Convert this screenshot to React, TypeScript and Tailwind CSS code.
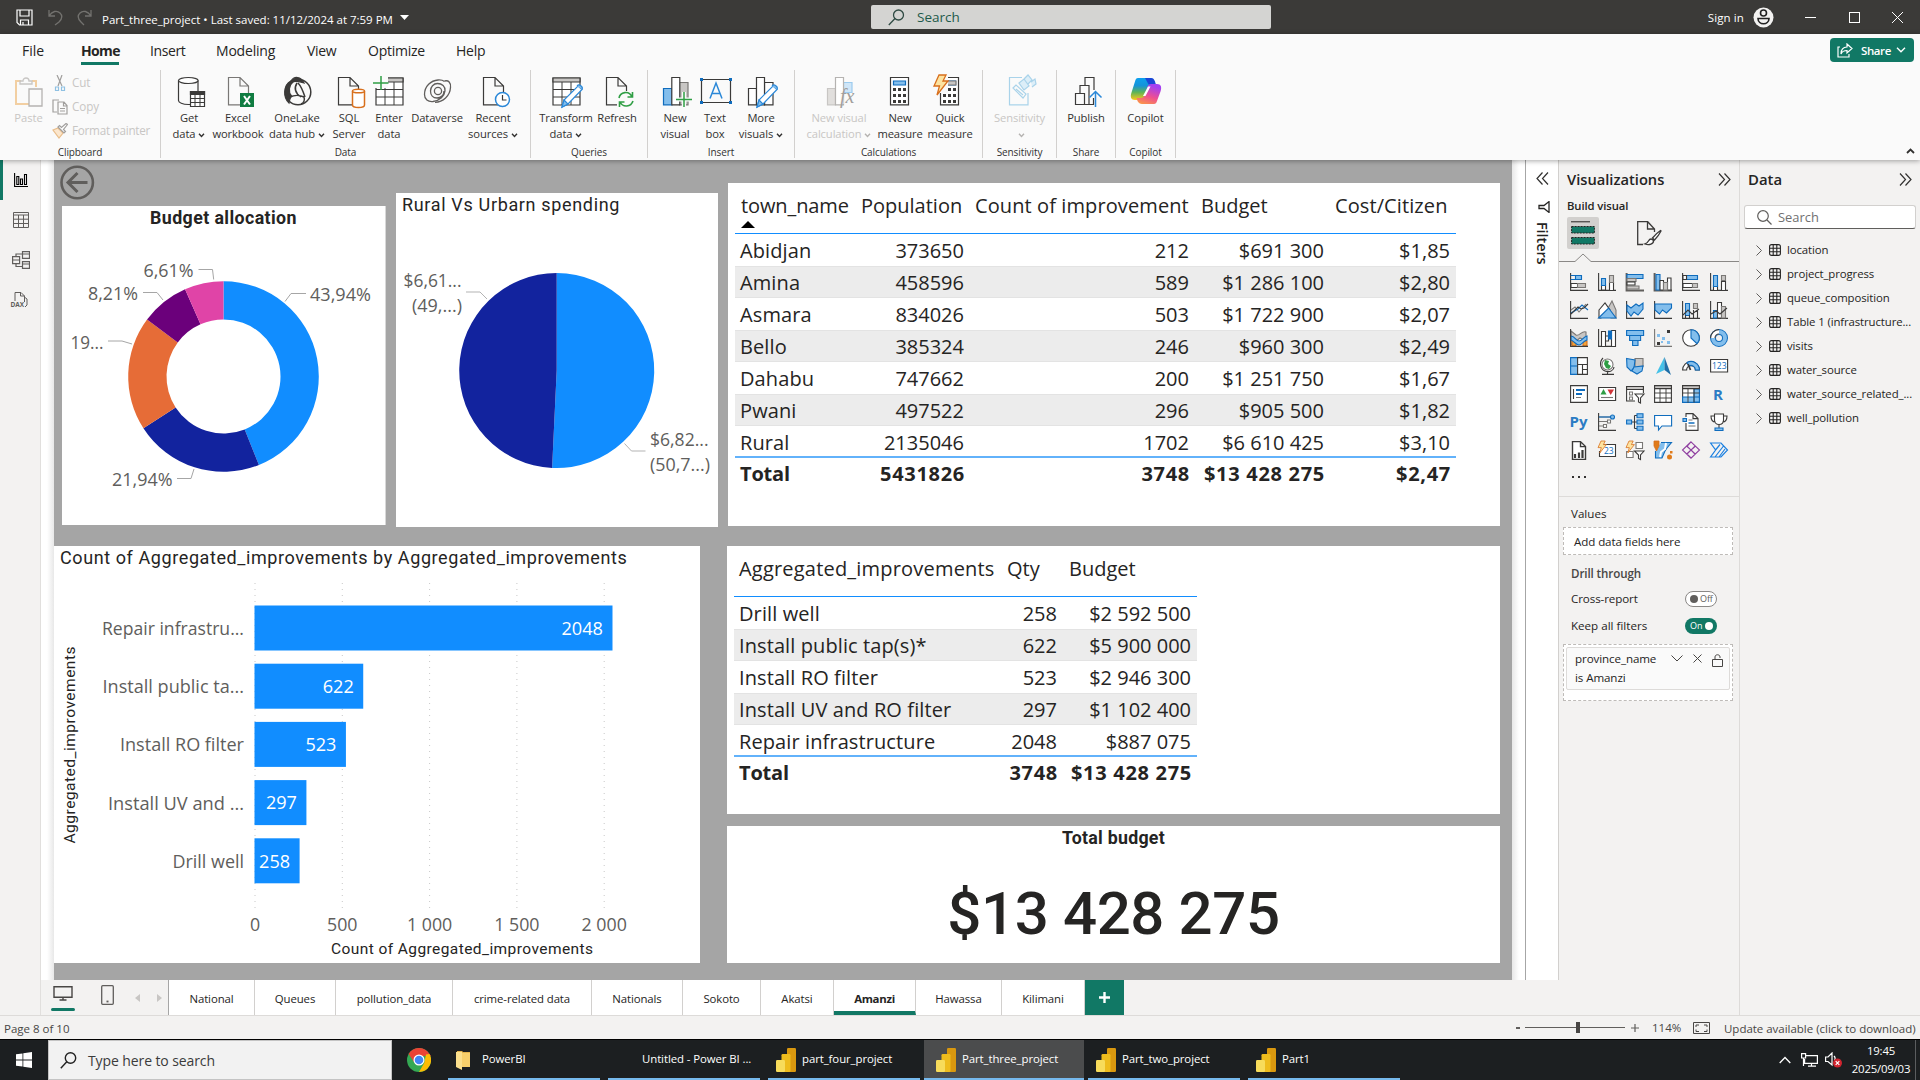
import React from "react";

type Kids = { children?: React.ReactNode };

const INK = "#3b3a39";
const BLUE = "#0f6cbd";
const SKY = "#83beec";
const GREY = "#c8c6c4";

/* ---------- Title bar ---------- */

function TitleBar() {
  return (
    <header className="flex h-[34px] w-full shrink-0 items-center bg-[#3b3a38] text-white">
      <div className="flex w-[855px] items-center pl-[16px]">
        <svg width="17" height="17" viewBox="0 0 17 17" fill="none" stroke="#fff" strokeWidth="1.2">
          <path d="M1 1h15v15H3.5L1 13.5z" />
          <path d="M4 1v6h9V1M4.5 16v-5h8v5M7 13v3" />
        </svg>
        <svg className="ml-[15px]" width="15" height="17" viewBox="0 0 15 17" fill="none" stroke="#73726f" strokeWidth="1.3">
          <path d="M1 1v6h6M1 7C4 2 9 1 12 4s2 6-1 9l-4 3" />
        </svg>
        <svg className="ml-[14px]" width="15" height="17" viewBox="0 0 15 17" fill="none" stroke="#73726f" strokeWidth="1.3">
          <path d="M14 1v6H8M14 7C11 2 6 1 3 4s-2 6 1 9l3 3" />
        </svg>
        <span className="ml-[10px] mt-[6px] whitespace-pre text-[11.5px] leading-4 tracking-[-0.01px]">
          Part_three_project • Last saved: 11/12/2024 at 7:59 PM
        </span>
        <svg className="ml-[7px]" width="9" height="5" viewBox="0 0 9 5">
          <path d="M0 0h9L4.5 5z" fill="#fff" />
        </svg>
      </div>
      <div className="ml-[16px] flex h-6 w-[400px] items-center rounded-[2px] bg-[#d4d4d2] pl-[17px]">
        <svg width="17" height="17" viewBox="0 0 17 17" fill="none" stroke="#2f4a43" strokeWidth="1.3">
          <circle cx="10.5" cy="6" r="5" />
          <path d="M7 9.5L.8 16" />
        </svg>
        <span className="ml-3 text-[13.5px] text-[#1d5a4b]">Search</span>
      </div>
      <div className="ml-auto flex items-center pr-[17px]">
        <span className="pt-px text-[11.5px] tracking-[0.1px]">Sign in</span>
        <svg className="ml-[9px]" width="21" height="21" viewBox="0 0 21 21" fill="none" stroke="#222" strokeWidth="1.6">
          <circle cx="10.5" cy="10.5" r="10" fill="#f3f2f1" stroke="none" />
          <circle cx="10.5" cy="6" r="3" />
          <path d="M5 11.5h11c0 7-11 7-11 0z" />
        </svg>
        <div className="ml-[31px] h-px w-[11px] bg-white" />
        <div className="ml-[33px] h-[11px] w-[11px] border border-white" />
        <svg className="ml-[32px]" width="11" height="11" viewBox="0 0 11 11" stroke="#fff">
          <path d="M0 0l11 11M11 0L0 11" />
        </svg>
      </div>
    </header>
  );
}

/* ---------- Ribbon icons, drawn in a 32 x 32 box ---------- */

function RIcon({ children }: Kids) {
  return (
    <svg className="overflow-visible" width="32" height="32" viewBox="0 0 32 32" fill="none" stroke={INK} strokeWidth="1.2">
      {children}
    </svg>
  );
}

function Doc({ x = 6, c = INK }: { x?: number; c?: string }) {
  return (
    <g transform={`translate(${x} 0)`} stroke={c}>
      <path d="M12 1.5H.5v27.3h20V10zM12 1.5V10h8.5" fill="#fafafa" />
    </g>
  );
}

function Grid() {
  return (
    <g>
      <path d="M3 2h27v27H3z" fill="#fff" />
      <path d="M3 2h27v4H3z" fill={GREY} />
      <path d="M3 13.5h27M3 21h27M12 6v23M21 6v23" strokeWidth="1" />
    </g>
  );
}

function Pencil() {
  return (
    <g stroke="#2b88d8">
      <path d="M28 10l4 3.5L18 28l-6 3 2-7z" fill="#fff" />
      <path d="M14 24l4 4-6 3zM27 10c2-2.5 6.5.5 5 3.5" fill="#83beec" />
    </g>
  );
}

const icoGet = (
  <RIcon>
    <path d="M5.5 4.5v20c0 2 4 4 10 4h2M25 4.5V15" />
    <ellipse cx="15.3" cy="4.5" rx="9.8" ry="3" fill="#fff" />
    <path d="M17.5 15.5h14v15h-14z" fill="#fff" />
    <path d="M17.5 15.5h14v3h-14z" fill={INK} />
    <path d="M17.5 22.5h14M17.5 26.5h14M22 18v12M27 18v12" strokeWidth="1" />
  </RIcon>
);
const icoExcel = (
  <RIcon>
    <Doc c="#797775" />
    <path d="M18 17h14v14H18z" fill="#107c41" stroke="none" />
    <path d="M22 20l6 8.5M28 20l-6 8.5" stroke="#fff" strokeWidth="2" />
  </RIcon>
);
const icoLake = (
  <RIcon>
    <circle cx="17" cy="16" r="12.8" strokeWidth="1.5" />
    <path d="M10 5C2 9 2 22 8 27c.5-3 1-5 2.5-7C7 16 8 9 12 6z" fill={INK} />
    <path d="M10 5c3-5 10-5 13 2-5-2-9-2-13-1z" fill={INK} />
    <path d="M16 7c-3 5-2 10 4 14M17 7c3 3 5 8 7 14M9 21c4-2 10-2 14 0 1 3 0 6-3 7" strokeWidth="1.5" />
  </RIcon>
);
const icoSql = (
  <RIcon>
    <Doc x={5} />
    <path d="M19.5 15v14c0 1.5 2 2.5 6 2.5s6-1 6-2.5V15" fill="#fff" stroke="#d86f1c" strokeWidth="1.5" />
    <ellipse cx="25.5" cy="15" rx="6" ry="1.8" fill="#fff" stroke="#d86f1c" strokeWidth="1.5" />
  </RIcon>
);
const icoEnter = (
  <RIcon>
    <Grid />
    <path d="M0 0h15v12H0z" fill="#fafafa" stroke="none" />
    <path d="M8 0v14M0 7h15.5" stroke="#2f9e44" strokeWidth="1.5" />
  </RIcon>
);
const icoDataverse = (
  <RIcon>
    <g strokeWidth="1.3" stroke="#605e5c">
      <circle cx="17" cy="15" r="3.6" />
      <path d="M23 15c0 4-3 7-7 7s-6.500-3-6.500-7 3-7.500 7-7.500c4.500 0 8 3 7.500 7.500-.5 5-5 9.500-12 10.500-5 .5-8.500-2-8.500-7C3.500 10 10 4.500 17 4c3-.2 5 .3 6.500 1.500" />
      <path d="M23.500 5c4-1 6.500 1.500 6 6.500C29 20 22 26 14 26.300" />
    </g>
  </RIcon>
);
const icoRecent = (
  <RIcon>
    <Doc />
    <circle cx="25.5" cy="23.5" r="7" fill="#fff" stroke="#2b88d8" strokeWidth="1.5" />
    <path d="M25.5 19v5h4" />
  </RIcon>
);
const icoTransform = (
  <RIcon>
    <Grid />
    <Pencil />
  </RIcon>
);
const icoRefresh = (
  <RIcon>
    <Doc x={5} />
    <path d="M16 15h17v17H16z" fill="#fafafa" stroke="none" />
    <path d="M18 22c1-6 10-8 13-1M31.5 16v5h-5M32 25c-2 6-10 7-13 1M18.5 31v-5h5" stroke="#2f9e44" strokeWidth="1.6" />
  </RIcon>
);
const icoNewVisual = (
  <RIcon>
    <path d="M4.5 12.5h8.5v16.3H4.5z" fill={SKY} stroke={BLUE} />
    <path d="M20.5 6.5h8.5v22.3h-8.5z" fill={GREY} stroke="#797775" />
    <path d="M12.8 1.5h8v27.3h-8z" fill="#fff" />
    <path d="M17 23.5h16M25 16v15" stroke="#fafafa" strokeWidth="4" />
    <path d="M17 23.5h16M25 16v15" stroke="#2f9e44" strokeWidth="1.5" />
  </RIcon>
);
const icoTextBox = (
  <RIcon>
    <path d="M2.5 3.5h29v23h-29z" />
    <path d="M11 22.5l6-15.5 6 15.5M13 17.5h8" stroke="#2b88d8" strokeWidth="1.5" />
    <path d="M1 2h3v3H1zM30 2h3v3h-3zM1 25h3v3H1zM30 25h3v3h-3z" fill={BLUE} stroke="none" />
  </RIcon>
);
const icoMore = (
  <RIcon>
    <path d="M3.5 12.5h8v16.3h-8zM19.5 6.5H28v22.3h-8.5z" fill="#fff" />
    <path d="M11.5 1.5h8v27.3h-8z" fill="#fff" />
    <Pencil />
  </RIcon>
);
const icoCalc = (
  <RIcon>
    <path d="M4.5 12.5h8v16.3h-8z" fill="#e1dfdd" stroke="#c8c6c4" />
    <path d="M20.5 6.5H29v10h-8.5z" fill="#cfe6f8" stroke="#9ccbee" />
    <path d="M12.5 1.5h8v27.3h-8z" fill="#fff" stroke="#b5b3b1" />
    <path d="M17 14h3.500v14H17z" fill="#fafafa" stroke="none" />
    <text x="17" y="27" fontFamily="Liberation Serif" fontStyle="italic" fontSize="20" fill="#a19f9d" stroke="none">fx</text>
  </RIcon>
);
function Calculator() {
  return (
    <g>
      <path d="M6.5 1.5h18v27.3h-18z" fill="#fff" />
      <path d="M9.5 5h12v4h-12z" fill={SKY} stroke={BLUE} />
      <path d="M9 13.5h13M9 19.5h13M9 25.5h13" strokeWidth="3" strokeDasharray="3 2" />
    </g>
  );
}
function Bolt({ k = 1, x = 0, y = 0 }: { k?: number; x?: number; y?: number }) {
  return (
    <path
      transform={`translate(${x} ${y}) scale(${k})`}
      d="M5 0h7L9 6h5L3 20l2.5-9H0z"
      fill="#fde3a0"
      stroke="#d86f1c"
      strokeWidth="1.3"
    />
  );
}
const icoMeasure = (
  <RIcon>
    <Calculator />
  </RIcon>
);
const icoQuick = (
  <RIcon>
    <Calculator />
    <path d="M13 5h9v4h-9z" fill={GREY} stroke="#797775" />
    <path d="M4 0h10v17H4z" fill="#fafafa" stroke="none" />
    <Bolt y={-1} />
  </RIcon>
);
const icoSens = (
  <RIcon>
    <g stroke="#a9d3ea">
      <path d="M24 17v11.8H5.5V1.5H18" />
      <path d="M9 12l3-3 10 9-3 4zM12 13l7 6" />
      <path d="M15 7l5-4 5 7-5 4zM20 3l4-4 4 5-4 4M27 6l4-3 1 5-4 3" fill="#dceef8" />
    </g>
  </RIcon>
);
const icoPublish = (
  <RIcon>
    <path d="M5.5 17.5h9v11h-9zM10 17V9.5h9V28M15 9V1.500h9V14M14.5 28.5h9V22" />
    <path d="M25.5 31V15.5M19.5 21.5l6-6 6 6" stroke="#2b88d8" strokeWidth="1.5" />
  </RIcon>
);
const icoCopilot = (
  <RIcon>
    <defs>
      <linearGradient id="cpA" x1="0" y1="0" x2="0" y2="1">
        <stop offset="0" stopColor="#0ca0ee" />
        <stop offset="0.35" stopColor="#1593d8" />
        <stop offset="0.65" stopColor="#5fb455" />
        <stop offset="1" stopColor="#fdc81a" />
      </linearGradient>
      <linearGradient id="cpB" x1="0.4" y1="0" x2="0" y2="1">
        <stop offset="0" stopColor="#a53ff0" />
        <stop offset="0.5" stopColor="#ef5090" />
        <stop offset="1" stopColor="#fda33b" />
      </linearGradient>
    </defs>
    <g stroke="none">
      <path d="M8 2h12c2 0 3.500 1 4.500 3.500L26 10h-5c-2 0-3 1-3.500 2.500l-3 9C14 23 12.500 24 11 24H5C1 24 0 21 1.500 16.500L5 5.500C5.500 3 6.500 2 8 2z" fill="url(#cpA)" />
      <path d="M15 2h6c2 0 3 1 4 3.500L26 9h-5c-2 0-3-1-3.500-2.500z" fill="#1b46d6" />
      <path d="M24 28H12c-2 0-3.500-1-4.500-3l-1-3H11c2 0 3-1 3.500-2.500l3-9C18 9 19.500 8 21 8h6c4 0 5 3 3.500 7.500L27 25c-.5 2-1.500 3-3 3z" fill="url(#cpB)" />
      <path d="M18 10.500h2.500L15.500 20H13z" fill="#fff" />
    </g>
  </RIcon>
);

/* ---------- Ribbon ---------- */

function Caret({ c = "#323130" }: { c?: string }) {
  return (
    <svg className="ml-[3px] inline-block" width="7" height="5" viewBox="0 0 7 5" fill="none" stroke={c} strokeWidth="1.4">
      <path d="M1 .8l2.500 2.700L6 .8" />
    </svg>
  );
}

type Item = { icon: React.ReactNode; a: string; b?: string; w: string; caret?: boolean; off?: boolean };

function Group({ label, width, pad, items }: { label: string; width: string; pad: string; items: Item[] }) {
  return (
    <div className={"flex h-[88px] flex-col border-r border-[#d2d0ce] " + width}>
      <div className={"flex h-[76px] " + pad}>
        {items.map((it) => (
          <div key={it.a + it.b} className={"flex flex-col items-center pt-[6px] " + it.w}>
            {it.icon}
            <div
              className={
                "mt-[2px] text-center text-[11.2px] leading-4 whitespace-nowrap tracking-[-0.1px] " +
                (it.off ? "text-[#c8c6c4]" : "text-[#323130]")
              }
            >
              <div>{it.a}</div>
              <div>
                {it.b}
                {it.caret && <Caret c={it.off ? "#b5b3b1" : "#323130"} />}
              </div>
            </div>
          </div>
        ))}
      </div>
      <div className="pt-[3px] text-center text-[10px] leading-[12px] tracking-[-0.1px] text-[#323130]">{label}</div>
    </div>
  );
}

function Clipboard() {
  return (
    <div className="flex h-[88px] w-[161px] flex-col border-r border-[#d2d0ce] text-[11.7px] text-[#c8c6c4]">
      <div className="flex h-[76px]">
        <div className="flex w-[49px] flex-col items-center pl-[8px] pt-[6px]">
          <svg width="28" height="32" viewBox="0 0 28 32" fill="none" strokeWidth="1.3">
            <path d="M14 28H1V5h5M17 5h4v6" stroke="#f2cfa2" strokeWidth="2" />
            <path d="M5 8V5h3c0-4 6-4 6 0h3v3z" stroke="#c8c6c4" />
            <path d="M14 13h13v17H14z" stroke="#b5b3b1" />
          </svg>
          <div className="mt-[2px] text-[11.2px] leading-4">Paste</div>
        </div>
        <div className="flex flex-col gap-[8px] pl-[3px] pt-[5px]">
          <div className="flex h-4 items-center">
            <svg width="16" height="16" viewBox="0 0 16 16" fill="none" stroke="#a19f9d" strokeWidth="1.2">
              <path d="M5 0l5 11M10 0L6 11" />
              <path d="M3.5 12h3v3.500h-3zM9.500 12h3v3.500h-3z" stroke="#8fc1e3" />
            </svg>
            <span className="ml-1 tracking-[-0.1px]">Cut</span>
          </div>
          <div className="flex h-4 items-center">
            <svg width="16" height="16" viewBox="0 0 16 16" fill="none" stroke="#a19f9d" strokeWidth="1.2">
              <path d="M5 13H1V1h6M6 3h6l3 3.500V15H6zM11.5 3v4H15M8 9.500h5M8 12h5" />
            </svg>
            <span className="ml-1 tracking-[-0.1px]">Copy</span>
          </div>
          <div className="flex h-4 items-center">
            <svg width="16" height="16" viewBox="0 0 16 16" fill="none" strokeWidth="1.2">
              <path d="M1 7l5-2 5 5-4 5z" fill="#fbe6cd" stroke="#e9bd8a" />
              <path d="M6 4l6 6 1.500-1.500-2-2 4-5-1.500-1-4.500 4-2-2z" stroke="#a19f9d" fill="#fff" />
            </svg>
            <span className="ml-1 whitespace-nowrap tracking-[-0.25px]">Format painter</span>
          </div>
        </div>
      </div>
      <div className="pt-[3px] text-center text-[10px] leading-[12px] tracking-[-0.1px] text-[#323130]">Clipboard</div>
    </div>
  );
}

const GROUPS: { label: string; width: string; pad: string; items: Item[] }[] = [
  {
    label: "Data",
    width: "w-[370px]",
    pad: "pl-[5px]",
    items: [
      { icon: icoGet, a: "Get", b: "data", w: "w-[46px]", caret: true },
      { icon: icoExcel, a: "Excel", b: "workbook", w: "w-[52px]" },
      { icon: icoLake, a: "OneLake", b: "data hub", w: "w-[66px]", caret: true },
      { icon: icoSql, a: "SQL", b: "Server", w: "w-[38px]" },
      { icon: icoEnter, a: "Enter", b: "data", w: "w-[42px]" },
      { icon: icoDataverse, a: "Dataverse", w: "w-[54px]" },
      { icon: icoRecent, a: "Recent", b: "sources", w: "w-[58px]", caret: true },
    ],
  },
  {
    label: "Queries",
    width: "w-[117px]",
    pad: "pl-[7px]",
    items: [
      { icon: icoTransform, a: "Transform", b: "data", w: "w-[56px]", caret: true },
      { icon: icoRefresh, a: "Refresh", w: "w-[46px]" },
    ],
  },
  {
    label: "Insert",
    width: "w-[147px]",
    pad: "pl-[9px]",
    items: [
      { icon: icoNewVisual, a: "New", b: "visual", w: "w-[36px]" },
      { icon: icoTextBox, a: "Text", b: "box", w: "w-[44px]" },
      { icon: icoMore, a: "More", b: "visuals", w: "w-[48px]", caret: true },
    ],
  },
  {
    label: "Calculations",
    width: "w-[188px]",
    pad: "pl-[9px]",
    items: [
      { icon: icoCalc, a: "New visual", b: "calculation", w: "w-[70px]", caret: true, off: true },
      { icon: icoMeasure, a: "New", b: "measure", w: "w-[52px]" },
      { icon: icoQuick, a: "Quick", b: "measure", w: "w-[48px]" },
    ],
  },
  { label: "Sensitivity", width: "w-[74px]", pad: "", items: [{ icon: icoSens, a: "Sensitivity", w: "w-[73px]", caret: true, off: true }] },
  { label: "Share", width: "w-[59px]", pad: "", items: [{ icon: icoPublish, a: "Publish", w: "w-[58px]" }] },
  { label: "Copilot", width: "w-[60px]", pad: "", items: [{ icon: icoCopilot, a: "Copilot", w: "w-[59px]" }] },
];

function Ribbon() {
  return (
    <div className="relative z-10 flex h-[126px] w-full shrink-0 flex-col bg-[#fafafa] shadow-[0_1px_5px_rgba(0,0,0,0.35)]">
      <div className="flex h-[36px]">
        <nav className="flex text-[14px] leading-[33px] text-[#252423]">
          <span className="ml-[22px] w-[59px]">File</span>
          <span className="relative w-[69px] font-bold tracking-[-0.65px]">
            Home
            <i className="absolute left-0 top-[28px] block h-[3px] w-[38px] bg-[#117865]" />
          </span>
          <span className="w-[66px] tracking-[-0.4px]">Insert</span>
          <span className="w-[91px] tracking-[-0.2px]">Modeling</span>
          <span className="w-[61px] tracking-[-0.3px]">View</span>
          <span className="w-[88px] tracking-[-0.25px]">Optimize</span>
          <span className="tracking-[-0.2px]">Help</span>
        </nav>
        <button className="ml-auto mr-[6px] mt-1 flex h-6 w-[84px] items-center rounded-[4px] bg-[#117865] pl-[7px] text-[11.5px] font-semibold text-white">
          <svg width="17" height="15" viewBox="0 0 17 15" fill="none" stroke="#fff" strokeWidth="1.2">
            <path d="M3 4H1v10h11v-3M10 1l5 4.500-5 4.500V7.500C7 7.500 5 8.500 4 11c0-4 2-7 6-7z" />
          </svg>
          <span className="ml-[7px] pt-px tracking-[-0.4px]">Share</span>
          <svg className="ml-[5px]" width="10" height="6" viewBox="0 0 10 6" fill="none" stroke="#fff" strokeWidth="1.4">
            <path d="M1 .8l4 4 4-4" />
          </svg>
        </button>
      </div>
      <div className="flex">
        <Clipboard />
        {GROUPS.map((g) => (
          <Group key={g.label} {...g} />
        ))}
        <svg className="ml-auto mr-[5px] mt-[78px]" width="9" height="6" viewBox="0 0 9 6" fill="none" stroke="#323130" strokeWidth="1.8">
          <path d="M1 5l3.500-3.500L8 5" />
        </svg>
      </div>
    </div>
  );
}

/* ---------- Left rail ---------- */

function Rail() {
  return (
    <aside className="flex w-[41px] shrink-0 flex-col border-r border-[#e1dfdd] bg-[#f3f2f1]">
      <div className="flex h-[40px] items-center border-l-[3px] border-[#117865] pl-[11px]">
        <svg width="14" height="15" viewBox="0 0 14 15" fill="none" stroke="#000" strokeWidth="1.1">
          <path d="M.6 0v13.500H14M2.800 3.500h2v8h-2zM6.500 6h2v5.500h-2zM10.500 1.500h2v10h-2z" />
        </svg>
      </div>
      <div className="flex h-[40px] items-center pl-[13px]">
        <svg width="16" height="16" viewBox="0 0 16 16" fill="none" stroke="#605e5c">
          <path d="M.5.5h15v15H.5zM.5 3h15M.5 7.200h15M.5 11.500h15M5.500 3v12.500M10.500 3v12.500" />
        </svg>
      </div>
      <div className="flex h-[40px] items-center pl-[12px]">
        <svg width="18" height="18" viewBox="0 0 18 18" fill="none" stroke="#605e5c" strokeWidth="1.2">
          <path d="M.6 5.600h7v7h-7zM.6 9h7M10.500.6h7v6.800h-7zM10.500 3h7M10.500 10.600h7v6.800h-7zM10.500 13h7M4 5.500V3h6.500M4 12.500V15.500h6.500" />
        </svg>
      </div>
      <div className="flex h-[40px] items-center pl-[10px]">
        <svg width="19" height="18" viewBox="0 0 19 18" fill="none" stroke="#605e5c">
          <path d="M5 10V1.500h6l3.500 3.500v6M10.500 1.500V5h4M15 6.500l2 1.500v6l-2 2" />
          <text x="0.500" y="16" fontSize="6.500" fontWeight="700" fontFamily="Open Sans" fill="#605e5c" stroke="none">DAX</text>
        </svg>
      </div>
    </aside>
  );
}

/* ---------- Report visuals ---------- */

function slice(cx: number, cy: number, R: number, r: number, from: number, to: number) {
  const p = (rad: number, f: number) => {
    const t = f * 2 * Math.PI;
    return (cx + rad * Math.sin(t)).toFixed(2) + " " + (cy - rad * Math.cos(t)).toFixed(2);
  };
  const big = to - from > 0.5 ? 1 : 0;
  if (r === 0) return `M${cx} ${cy}L${p(R, from)}A${R} ${R} 0 ${big} 1 ${p(R, to)}Z`;
  return `M${p(R, from)}A${R} ${R} 0 ${big} 1 ${p(R, to)}L${p(r, to)}A${r} ${r} 0 ${big} 0 ${p(r, from)}Z`;
}

function L({ x, y, w, s = 17.5, fill = "#605e5c", children }: { x: number; y: number; w: number; s?: number; fill?: string; children: string }) {
  return (
    <text x={x} y={y} textLength={w} lengthAdjust="spacingAndGlyphs" fontFamily="Open Sans" fontSize={s} fill={fill}>
      {children}
    </text>
  );
}

function BudgetDonut() {
  const parts: [number, number, string][] = [
    [0, 0.4394, "#118dff"],
    [0.4394, 0.6588, "#12239e"],
    [0.6588, 0.8518, "#e66c37"],
    [0.8518, 0.9339, "#6b007b"],
    [0.9339, 1, "#e044a7"],
  ];
  return (
    <div className="h-[319px] w-[324px] border-r border-[#d8d8d8] bg-white">
      <h3 className="h-[24px] text-center font-[Roboto] text-[17.8px] font-bold leading-[24px] tracking-[0.4px] text-[#252423]">Budget allocation</h3>
      <svg width="323" height="295" viewBox="62 230 323 295">
        {parts.map(([a, b, c]) => (
          <path key={c} d={slice(223.5, 376.5, 95.3, 57, a, b)} fill={c} />
        ))}
        <g fill="none" stroke="#a6a6a6" strokeWidth="1">
          <path d="M198.5 269.500h14l1.200 10M143 292.500h14l6 7.500M306 293.500h-15l-6 8M108 341h14l10 3M177 478.500h14l3-9.500" />
        </g>
        <L x={143.5} y={276.7} w={50}>6,61%</L>
        <L x={88} y={299.7} w={50}>8,21%</L>
        <L x={310} y={300.7} w={61}>43,94%</L>
        <L x={70.5} y={348.7} w={33}>19...</L>
        <L x={112} y={485.7} w={60.5}>21,94%</L>
      </svg>
    </div>
  );
}

function SpendingPie() {
  return (
    <div className="h-[334px] w-[322px] bg-white">
      <h3 className="h-[24px] pl-[6px] font-[Roboto] text-[18px] leading-[24px] tracking-[0.66px] text-[#252423]">Rural Vs Urbarn spending</h3>
      <svg width="322" height="310" viewBox="396 217 322 310">
        <path d={slice(556.7, 370.5, 97.5, 0, 0, 0.5075)} fill="#118dff" />
        <path d={slice(556.7, 370.5, 97.5, 0, 0.5075, 1)} fill="#12239e" />
        <g fill="none" stroke="#b3b3b3">
          <path d="M466 292h14l7 7M624.500 443.500l7 7.500h14" />
        </g>
        <L x={403.5} y={286.7} w={58}>$6,61...</L>
        <L x={412} y={312.2} w={50}>(49,...)</L>
        <L x={650} y={445.7} w={58.5}>$6,82...</L>
        <L x={650} y={471.2} w={60}>(50,7...)</L>
      </svg>
    </div>
  );
}

const TOWNS = [
  ["Abidjan", "373650", "212", "$691 300", "$1,85"],
  ["Amina", "458596", "589", "$1 286 100", "$2,80"],
  ["Asmara", "834026", "503", "$1 722 900", "$2,07"],
  ["Bello", "385324", "246", "$960 300", "$2,49"],
  ["Dahabu", "747662", "200", "$1 251 750", "$1,67"],
  ["Pwani", "497522", "296", "$905 500", "$1,82"],
  ["Rural", "2135046", "1702", "$6 610 425", "$3,10"],
];

const FIXES = [
  ["Drill well", "258", "$2 592 500"],
  ["Install public tap(s)*", "622", "$5 900 000"],
  ["Install RO filter", "523", "$2 946 300"],
  ["Install UV and RO filter", "297", "$1 102 400"],
  ["Repair infrastructure", "2048", "$887 075"],
];

function Rows({ rows, cols, total }: { rows: string[][]; cols: string; total: string[] }) {
  return (
    <div className="text-[20px] text-[#252423]">
      {rows.map((r, i) => (
        <div key={r[0]} className={"grid h-8 " + cols + (i % 2 ? " border-y border-[#e3e3e3] bg-[#ececec] leading-[31px]" : " leading-[33px]")}>
          {r.map((c, j) => (
            <span key={j} className={"h-[30px] whitespace-nowrap px-[6px] " + (j ? "text-right" : "pl-[5px] text-left tracking-[0.1px]")}>
              {c}
            </span>
          ))}
        </div>
      ))}
      <div className={"mt-[-2px] grid h-8 border-t-2 border-[#62b2fb] font-bold leading-[31px] " + cols}>
        {total.map((c, j) => (
          <span key={j} className={"whitespace-nowrap " + (j ? "pr-[5px] text-right tracking-[0.7px]" : "pl-[5px] text-left tracking-[-0.2px]")}>
            {c}
          </span>
        ))}
      </div>
    </div>
  );
}

function TownTable() {
  const cols = "grid-cols-[121px_114px_225px_135px_126px]";
  return (
    <div className="h-[343px] w-[772px] bg-white pl-[7px]">
      <div className="w-[721px]">
        <div className={"grid h-[51px] border-b border-[#118dff] pt-[9px] text-[20px] leading-[28px] whitespace-nowrap text-[#252423] " + cols}>
          <div className="pl-[6px] tracking-[-0.1px]">
            town_name
            <svg className="mt-px block" width="14" height="7" viewBox="0 0 14 7">
              <path d="M0 7h14L7 0z" />
            </svg>
          </div>
          <span className="pl-[5px]">Population</span>
          <span className="pl-[5px] tracking-[0.1px]">Count of improvement</span>
          <span className="pl-[6px]">Budget</span>
          <span className="pl-[5px] tracking-[0.1px]">Cost/Citizen</span>
        </div>
        <Rows rows={TOWNS} cols={cols} total={["Total", "5431826", "3748", "$13 428 275", "$2,47"]} />
      </div>
    </div>
  );
}

function FixTable() {
  const cols = "grid-cols-[267px_62px_134px]";
  return (
    <div className="h-[268px] w-[773px] bg-white pl-[7px]">
      <div className="w-[463px]">
        <div className={"grid h-[51px] border-b border-[#118dff] pt-[9px] text-[20px] leading-[28px] whitespace-nowrap text-[#252423] " + cols}>
          <span className="pl-[5px] tracking-[0.2px]">Aggregated_improvements</span>
          <span className="pl-[6px]">Qty</span>
          <span className="pl-[6px]">Budget</span>
        </div>
        <Rows rows={FIXES} cols={cols} total={["Total", "3748", "$13 428 275"]} />
      </div>
    </div>
  );
}

function ImprovementBars() {
  const bars: [string, number, number, number][] = [
    ["Repair infrastru...", 102, 2048, 41.5],
    ["Install public ta...", 102.5, 622, 31],
    ["Install RO filter", 120, 523, 31],
    ["Install UV and ...", 108, 297, 31],
    ["Drill well", 172.5, 258, 31],
  ];
  return (
    <div className="h-[417px] w-[646px] bg-white">
      <h3 className="h-[24px] pl-[6px] font-[Roboto] text-[18px] leading-[24px] tracking-[0.59px] whitespace-nowrap text-[#252423]">
        Count of Aggregated_improvements by Aggregated_improvements
      </h3>
      <svg width="646" height="393" viewBox="54 570 646 393">
        {["0", "500", "1 000", "1 500", "2 000"].map((t, i) => (
          <g key={t}>
            <path d={`M${255 + i * 87.3} 583V909`} stroke="#c8c8c8" strokeDasharray="1 5" />
            <text x={255 + i * 87.3} y="930.5" textAnchor="middle" fontFamily="Open Sans" fontSize="17.8" fill="#605e5c">
              {t}
            </text>
          </g>
        ))}
        {bars.map(([name, x, v, lw], i) => {
          const y = 605.5 + i * 58.2;
          const w = v * 0.1748;
          return (
            <g key={name}>
              <rect x="254.5" y={y} width={w} height="45" fill="#118dff" />
              <L x={x} y={y + 29.5} w={244 - x} s={17.8}>{name}</L>
              <L x={254.5 + w - 9.5 - lw} y={y + 29.2} w={lw} s={17.8} fill="#fff">{String(v)}</L>
            </g>
          );
        })}
        <text x="462" y="953.5" textAnchor="middle" textLength="262" fontFamily="Roboto" fontSize="15.5" fill="#252423">
          Count of Aggregated_improvements
        </text>
        <text transform="translate(74.5 745) rotate(-90)" textAnchor="middle" textLength="197" fontFamily="Roboto" fontSize="15.5" fill="#252423">
          Aggregated_improvements
        </text>
      </svg>
    </div>
  );
}

function Report() {
  return (
    <main className="flex h-[820px] w-[1484px] shrink-0 bg-[linear-gradient(90deg,#fff_0px,#fff_6px,#e8e8e8_13px,#e8e8e8_1471px,#fff_1478px,#fff_100%)] pl-[13px] pr-[13px]">
      <div className="h-full w-[1458px] bg-[#a5a5a5]">
        <div className="flex h-[386px] items-start">
          <div className="ml-[6px] flex w-[336px] flex-col pt-[5px]">
            <svg width="35" height="35" viewBox="0 0 35 35" fill="none" stroke="#605e5c" strokeWidth="3">
              <circle cx="17.2" cy="17.5" r="15.7" strokeWidth="2.6" />
              <path d="M27.5 17.500H8M17.500 8L8 17.500l9.500 9.500" />
            </svg>
            <div className="ml-[2px] mt-[6px]">
              <BudgetDonut />
            </div>
          </div>
          <div className="pt-[33px]">
            <SpendingPie />
          </div>
          <div className="ml-[10px] pt-[23px]">
            <TownTable />
          </div>
        </div>
        <div className="flex items-start">
          <ImprovementBars />
          <div className="ml-[27px] flex flex-col gap-[12px]">
            <FixTable />
            <div className="h-[137px] w-[773px] bg-white text-center font-[Roboto] text-[#252423]">
              <h3 className="h-[24px] text-[17.8px] font-bold leading-[24px] tracking-[0.25px]">Total budget</h3>
              <p className="pt-[29px] text-[60px] font-medium leading-[70px] tracking-[-0.4px]">$13 428 275</p>
            </div>
          </div>
        </div>
      </div>
    </main>
  );
}

/* ---------- Visualization gallery, drawn in 18 x 18 boxes ---------- */

const AX = "M.6 0v17.4H18";

const GALLERY: React.ReactNode[] = [
  <><path d={AX} /><path d="M.6 6.500h5M.6 2.500h5M5.500 2.500h6v4h-6z" fill={SKY} stroke={BLUE} /><path d="M1 10.500h7v4H1z" fill="#fff" /><path d="M7.500 10.500h8v4h-8z" fill={GREY} stroke="#797775" /></>,
  <><path d={AX} /><path d="M3.500 12h4v5h-4z" fill="#fff" /><path d="M3.500 5.500h4v7h-4z" fill={SKY} stroke={BLUE} /><path d="M11.500 9.500h4v8h-4z" fill="#fff" /><path d="M11.500 2.500h4v7h-4z" fill={GREY} stroke="#797775" /></>,
  <><path d="M.6 0v17.400H18" stroke="#605e5c" strokeWidth="2" /><path d="M1 1.500h16v4H1z" fill={SKY} stroke={BLUE} /><path d="M1 5.500h9v3H1zM1 13h12v3H1z" fill={GREY} stroke="#797775" /><path d="M1 9h8v3H1z" fill="#fff" /></>,
  <><path d="M.6 0v17.400H18" stroke="#605e5c" strokeWidth="2" /><path d="M2 1.500h4V17H2z" fill={SKY} stroke={BLUE} /><path d="M6 7.500h3.500V17H6zM13.500 5h3.500v12h-3.500z" fill="#fff" /><path d="M9.500 9.500h4V17h-4z" fill={GREY} stroke="#797775" /></>,
  <><path d={AX} /><path d="M4.500 2.500h11v4h-11z" fill={SKY} stroke={BLUE} /><path d="M1 2.500h3.500v4H1zM1 10.500h9.500v4H1z" fill="#fff" /><path d="M10.500 10.500h5v4h-5z" fill={GREY} stroke="#797775" /></>,
  <><path d={AX} /><path d="M3.500 12.500h4v5h-4zM11.500 8.500h4v9h-4z" fill="#fff" /><path d="M3.500 2.500h4v11h-4z" fill={SKY} stroke={BLUE} /><path d="M11.500 2.500h4v5h-4z" fill={GREY} stroke="#797775" /></>,
  <><path d={AX} /><path d="M1 9l4-3 4 5 7-8" stroke="#797775" /><path d="M1 12l7-4 4-4 6 5" stroke={BLUE} /><path d="M1 13L8 6l3 2 3-1 4-4" /></>,
  <><path d="M9 9l5-9 4 9v8h-5z" fill={GREY} stroke="#797775" /><path d="M1 9l6-7 5 7-9 8H1z" fill="#fff" /><path d="M.6 17l10-10L18 17z" fill={SKY} stroke={BLUE} /></>,
  <><path d={AX} /><path d="M1 4l4 3 5-4 3 2 4-3v6l-5 6-4-3-3 4-4-5z" fill={SKY} stroke={BLUE} /></>,
  <><path d={AX} /><path d="M1 3h16.500v4l-5 5-4-3-3 4L1 9z" fill={SKY} stroke={BLUE} /></>,
  <><path d={AX} /><path d="M3.500 2.500h4v12h-4z" fill={SKY} stroke={BLUE} /><path d="M11.500 2.500h4v5h-4z" fill={GREY} stroke="#797775" /><path d="M3.500 14v3M7.500 14v3M11.500 9v8M15.500 9v8M1 14l5-5 4 4 7-5" /></>,
  <><path d={AX} /><path d="M3.500 9.500h4v7.500h-4z" fill={SKY} stroke={BLUE} /><path d="M7.500 1.500h4V17h-4z" fill="#fff" /><path d="M11.500 5.500h4V17h-4z" fill={GREY} stroke="#797775" /><path d="M1 13l5-3 4 3 7-6" /></>,
  <><path d="M1 2l5 4c3 2 6-5 10-3v9l-6-3-9 7z" fill={GREY} stroke="#797775" /><path d="M2 12h4v5H2zM13 12h4v5h-4z" fill="#f2a33a" stroke="#d86f1c" /><path d="M1 7c4 0 5 5 8 5s4-4 8-5v4c-4 1-5 5-8 5s-5-4-8-5z" fill={SKY} stroke={BLUE} /><path d={AX} /></>,
  <><path d={AX} /><path d="M3.500 2.500h4v15h-4zM13.500 1.500h4v16h-4zM7.500 7h3v5h-3z" fill="#fff" /><path d="M10.500 2h3v8h-3z" fill={BLUE} stroke={BLUE} /></>,
  <><path d="M.6 1.500h17v5H.6zM3.600 6.500h11v5h-11zM6.600 11.500h5.400v5H6.600z" fill={SKY} stroke={BLUE} /></>,
  <><path d={AX} stroke="#797775" /><path d="M13 1h3v3h-3zM3 13h3v3H3z" fill={INK} stroke="none" /><path d="M3 5h3v3H3zM8 8h3v3H8zM13 12h3v3h-3zM7 12h2v2H7z" fill={SKY} stroke="none" /></>,
  <><circle cx="9" cy="9" r="8.3" fill="#fff" /><path d="M9 9V.7a8.300 8.300 0 016 14z" fill={SKY} stroke={BLUE} /></>,
  <><circle cx="9" cy="9" r="6" stroke={BLUE} strokeWidth="6" /><circle cx="9" cy="9" r="6" stroke={SKY} strokeWidth="4" /><path d="M9 3a6 6 0 00-6 6" stroke="#fff" strokeWidth="4.5" /><path d="M.6 9A8.400 8.400 0 019 .6M5 9a4 4 0 014-4" /></>,
  <><path d="M.6.6h7v16.800h-7z" fill={SKY} stroke={BLUE} /><path d="M.6 9h7" stroke={BLUE} /><path d="M7.600.6h9.800v16.800H7.600zM7.600 7.500h9.800M12.500 7.500v10M12.500 12.500h5" fill="#fff" /></>,
  <><circle cx="9.5" cy="7.5" r="5.5" fill="#fff" stroke="#797775" /><path d="M7 3l4 1-1 3 3 2-2 3-3-1-2-4z" fill="#2f9e44" stroke="none" /><path d="M5 1C1 5 2 12 7 14s9-1 9-4M9.500 14v3M4 17.400h12" /></>,
  <><path d="M9 1.500h8v8l-8 2z" fill={GREY} stroke="#797775" /><path d="M.6 1.500L9 3l-1 8-3 3-4-4z" fill={SKY} stroke={BLUE} /><path d="M8 10l9-1-1 5-5 3-5-3z" fill={SKY} stroke={BLUE} /></>,
  <><path d="M10.500 0L2 17l8.500-4z" fill="#45c1e8" stroke="none" /><path d="M10.500 0L17 18l-6.500-5z" fill="#1f6fa8" stroke="none" /></>,
  <><path d="M.6 13A8.400 8.400 0 0117.400 13h-4a4.400 4.400 0 00-8.800 0z" fill="#fff" /><path d="M5 5.500a8.400 8.400 0 0112.400 7.500h-4a4.400 4.400 0 00-6.500-4z" fill={SKY} stroke={BLUE} /><path d="M8.500 13L6 7" strokeWidth="1.8" /></>,
  <><path d="M.6 2.500h17v12.500H.6z" fill="#fff" /><text x="2" y="12" fontSize="8.5" fontFamily="Open Sans" fill={BLUE} stroke="none">123</text></>,
  <><path d="M.6.6h16.800v16.800H.6z" fill="#fff" /><path d="M3.500 4v10" /><path d="M6 5.500h6M6 12.500h5" stroke="#797775" /><path d="M6 5h9M6 9h6" stroke={BLUE} strokeWidth="2" /></>,
  <><path d="M.6 2.500h17v13H.6z" fill="#fff" /><path d="M2.500 9.500L5.500 4l3 5.500z" fill="#2f9e44" stroke="none" /><path d="M9.500 4.500h6.500L12.700 10z" fill="#d13438" stroke="none" /><path d="M3 12.500h12" stroke="#797775" /></>,
  <><path d="M9 16H.6V1.500h16.800V8" fill="#fff" /><path d="M.6 1.500h16.800v3H.6z" fill={GREY} /><path d="M3.500 7h3v3h-3zM3.500 12h3v3h-3z" stroke="#797775" /><path d="M9 9h9l-3.500 4v5l-2-1v-4z" fill="#fff" /></>,
  <><path d="M.6.6h16.800v16.800H.6z" fill="#fff" /><path d="M.6.6h16.800v3H.6z" fill={GREY} /><path d="M.6 8h16.800M.6 13h16.800M6 3.600v14M12 3.600v14" strokeWidth=".9" /></>,
  <><path d="M.6.6h16.800v16.800H.6z" fill="#fff" /><path d="M6 12h11.400v5.400H.6V12zM12 4h5.400v13H12z" fill={SKY} stroke={BLUE} /><path d="M.6.6h16.800v3H.6z" fill={GREY} /><path d="M.6 8h16.800M6 3.600v14M12 3.600v14" strokeWidth=".9" /></>,
  <><text x="3" y="14.5" fontSize="15" fontWeight="700" fontFamily="Open Sans" fill="#2b7cc4" stroke="none">R</text></>,
  <><text x="-.5" y="13.5" fontSize="15" fontWeight="700" fontFamily="Open Sans" fill="#2b7cc4" stroke="none" textLength="18">Py</text></>,
  <><path d={AX} /><path d="M1 4h12M1 8.500h9M1 13h4" stroke="#797775" /><path d="M1 4h12" stroke={BLUE} /><circle cx="14.5" cy="4" r="2" fill={SKY} stroke={BLUE} /><path d="M9.500 7h3v3h-3zM5.500 11.500h3v3h-3z" fill="#fff" stroke="#797775" /></>,
  <><path d="M6 9h5M8.500 2.500v13M8.500 2.500H11M8.500 15.500H11" /><path d="M.6 7h5v4h-5zM11 .7h6v4h-6zM11 7h6v4h-6zM11 13.300h6v4h-6z" fill={SKY} stroke={BLUE} /></>,
  <><path d="M.6 2.500h17v10.500H8l-3.500 4V13H.6z" fill="#fff" stroke={BLUE} /></>,
  <><path d="M4 4V.6h7l5 5v11.800H4V10M11 .6v5h5" fill="#fff" /><path d="M1 5.500h3.500v3H1z" fill={SKY} stroke={BLUE} /><path d="M6.500 7h4M6.500 13h7" stroke="#797775" /><path d="M6.500 10h6" stroke={BLUE} strokeWidth="1.5" /></>,
  <><path d="M4.500 1h9v6c0 6-9 6-9 0zM4.500 3H1c0 4 2 6 4.500 6M13.500 3H17c0 4-2 6-4.500 6M9 11.500V15" fill="#fff" /><path d="M5 15h8v2.500H5z" fill={SKY} stroke={BLUE} /></>,
  <><path d="M2.500.6h8l5 5v12.800h-13zM10.500.6v5h5" fill="#fff" strokeWidth="1.4" /><path d="M5 13v4M9 11.500V17M12.500 9v8" strokeWidth="2.2" /></>,
  <><path d="M5 3.500h12.500v12H1.500V10" fill="#fff" /><text x="6" y="12.5" fontSize="8.5" fontFamily="Open Sans" fill={BLUE} stroke="none">23</text><Bolt k={0.6} /></>,
  <><path d="M10 1.500h6.500v6H10zM.6 10.500h6.500v6H.6z" fill="#fff" stroke="#797775" /><path d="M8.500 10h9.500l-3.500 4v4.500l-2-1V14z" fill="#fff" /><Bolt k={0.6} /></>,
  <><path d="M7 1.500h10.500L13 7l-2 3-3 7H1.500V10" fill={SKY} stroke={BLUE} /><path d="M12 2l-1 6-4 3-1 5" stroke="#fff" strokeWidth="2" /><path d="M0 0h5v5l-2.500 5L0 5z" fill="#e07b1a" stroke="#d86f1c" strokeWidth=".8" /><circle cx="15.5" cy="16" r="2.5" fill="#e07b1a" stroke="none" /><path d="M16 10h2.500v2.500H16z" fill="#e07b1a" stroke="none" /></>,
  <><path d="M9 .8L17.500 9 9 17.200.5 9zM4.800 5l4.200 4-4.200 4M13.200 5L9 9l4.200 4M9 1l-4 4.500L9 9l4-3.500M9 17l-4-4 4-4 4 4" stroke="#8f3fa0" /></>,
  <><path d="M.6 2h10.400l6.500 7-6.500 7H.6l5-7zM5.500 9L10 3.500M5 16L13.500 5M9 16l6-8" stroke="#1a7fe0" strokeWidth="1.2" /></>,
];

function Chevrons({ flip = false }: { flip?: boolean }) {
  return (
    <svg width="13" height="13" viewBox="0 0 13 13" fill="none" stroke="#323130" strokeWidth="1.2" className={flip ? "rotate-180" : ""}>
      <path d="M1 .5l5.500 6-5.500 6M6.500.5l5.500 6-5.500 6" />
    </svg>
  );
}

function FiltersPane() {
  return (
    <div className="flex w-[34px] shrink-0 flex-col items-center border-l border-r border-l-[#a6a6a6] border-r-[#d2d0ce] bg-white pt-[12px]">
      <Chevrons flip />
      <svg className="ml-[3px] mt-[16px] rotate-90" width="12" height="12" viewBox="0 0 12 12" fill="none" stroke="#252423" strokeWidth="1.3">
        <path d="M.6 1h10.800L7.500 6v5h-3V6z" />
      </svg>
      <span className="mt-[9px] text-[14.5px] font-semibold leading-[16px] tracking-[-0.1px] text-[#252423] [writing-mode:vertical-rl]">Filters</span>
    </div>
  );
}

function Visualizations() {
  return (
    <section className="flex w-[181px] shrink-0 flex-col border-r border-[#dddbd9] bg-[#f3f2f1] text-[#252423]">
      <div className="flex h-[39px] items-center justify-between pl-[8px] pr-[8px]">
        <h2 className="text-[14.7px] font-semibold">Visualizations</h2>
        <Chevrons />
      </div>
      <div className="pl-[8px] text-[11.3px] font-semibold leading-[13px] tracking-[-0.1px]">Build visual</div>
      <div className="flex h-[38px] items-start pl-[8px] pt-[5px]">
        <div className="flex h-8 w-8 items-center justify-center rounded-[2px] bg-[#d2d0ce]">
          <svg width="24" height="24" viewBox="0 0 24 24" stroke="#252423" fill="#117865">
            <path d="M0 .8h19" />
            <path d="M.6 5.500h22.800v6.500H.6zM.6 16.500h22.800V23H.6z" strokeDasharray="2 1" />
          </svg>
        </div>
        <svg className="ml-[38px] mt-[4px]" width="25" height="25" viewBox="0 0 25 25" fill="none" stroke={INK} strokeWidth="1.3">
          <path d="M6 23.500H.7V.7h10L17.500 8v3M10.500.7V8h7" />
          <path d="M23.500 9.500c-3 2-6 5-8 7.500l2 2c3-3 5-6 6.500-9zM14 18c-3 0-2 4-6 5 4 1.500 9 0 8.500-3.500z" fill="#fff" />
        </svg>
      </div>
      <svg className="block shrink-0" width="180" height="12" viewBox="0 0 180 12" fill="none" stroke="#8a8886">
        <path d="M0 11.500h16l8-7.500 8 7.500h148" />
      </svg>
      <div className="mt-[11px] grid w-[179px] grid-cols-6 gap-y-[10px] pl-[11px]">
        {GALLERY.map((g, i) => (
          <svg key={i} className="overflow-visible" width="18" height="18" viewBox="0 0 18 18" fill="none" stroke={INK} strokeWidth="1.1">
            {g}
          </svg>
        ))}
      </div>
      <div className="mt-[17px] flex gap-[4px] pl-[13px]">
        <i className="h-[2px] w-[2px] bg-[#323130]" />
        <i className="h-[2px] w-[2px] bg-[#323130]" />
        <i className="h-[2px] w-[2px] bg-[#323130]" />
      </div>
      <div className="mt-[18px] border-t border-[#dddbd9] px-[4px] text-[11.6px]">
        <div className="pl-[8px] pt-[8px] leading-[18px]">Values</div>
        <div className="mt-[4px] flex h-[28px] w-[170px] items-center border border-dashed border-[#bebbb8] bg-white pl-[10px] pt-px tracking-[-0.1px]">
          Add data fields here
        </div>
        <div className="mt-[10px] pl-[8px] font-semibold leading-[18px] tracking-[-0.1px] text-[#484644]">Drill through</div>
        <div className="mt-[7px] flex h-[18px] items-center pl-[8px] tracking-[-0.1px]">
          Cross-report
          <div className="ml-auto mr-[18px] flex h-4 w-8 items-center rounded-full border border-[#8a8886] bg-white pl-[4px] text-[9px] text-[#605e5c]">
            <i className="mr-[2px] h-2 w-2 rounded-full bg-[#605e5c]" />
            Off
          </div>
        </div>
        <div className="mt-[9px] flex h-[18px] items-center pl-[8px]">
          Keep all filters
          <div className="ml-auto mr-[18px] flex h-4 w-8 items-center rounded-full bg-[#117865] pl-[5px] text-[9px] text-white">
            On
            <i className="ml-[2px] h-2 w-2 rounded-full bg-white" />
          </div>
        </div>
        <div className="mt-[9px] h-[57px] w-[170px] border border-dashed border-[#bebbb8] bg-white p-[2px]">
          <div className="h-[43px] rounded-[2px] border border-[#dddbd9] bg-[#fafafa] pl-[8px] pt-px leading-[19px] tracking-[-0.1px]">
            <div className="flex items-center">
              <span className="w-[96px]">province_name</span>
              <svg width="12" height="7" viewBox="0 0 12 7" fill="none" stroke="#484644">
                <path d="M.5.5L6 6 11.500.5" />
              </svg>
              <svg className="ml-[10px]" width="9" height="9" viewBox="0 0 9 9" stroke="#484644">
                <path d="M.5.5l8 8M8.500.5l-8 8" />
              </svg>
              <svg className="ml-[10px] mt-[3px]" width="11" height="13" viewBox="0 0 11 13" fill="none" stroke="#484644">
                <path d="M.5 5.500h10v7H.5zM3 5.500V3c0-3 5-3 5 0v1" />
              </svg>
            </div>
            <div>is Amanzi</div>
          </div>
        </div>
      </div>
    </section>
  );
}

const TABLES = [
  "location",
  "project_progress",
  "queue_composition",
  "Table 1 (infrastructure...",
  "visits",
  "water_source",
  "water_source_related_...",
  "well_pollution",
];

function DataPane() {
  return (
    <section className="flex flex-1 flex-col bg-[#f3f2f1] text-[#252423]">
      <div className="flex h-[39px] items-center justify-between pl-[8px] pr-[8px]">
        <h2 className="text-[14.9px] font-semibold">Data</h2>
        <Chevrons />
      </div>
      <div className="ml-[4px] mt-[6px] flex h-6 w-[172px] items-center rounded-[3px] border border-[#d2d0ce] border-b-[#605e5c] bg-white pl-[12px]">
        <svg width="15" height="15" viewBox="0 0 15 15" fill="none" stroke="#605e5c" strokeWidth="1.2">
          <circle cx="6" cy="6" r="5.3" />
          <path d="M10 10l4.500 4.500" />
        </svg>
        <span className="ml-[6px] pt-px text-[12.9px] text-[#707070]">Search</span>
      </div>
      <div className="mt-[9px]">
        {TABLES.map((t) => (
          <div key={t} className="flex h-6 items-center pl-[16px]">
            <svg width="6" height="11" viewBox="0 0 6 11" fill="none" stroke="#605e5c">
              <path d="M.5.5l5 5-5 5" />
            </svg>
            <svg className="ml-[7px]" width="12" height="12" viewBox="0 0 12 12" fill="none" stroke="#252423" strokeWidth="1.1">
              <rect x=".6" y=".6" width="10.8" height="10.8" rx="2" />
              <path d="M4.200.6v10.800M7.800.6v10.800M.6 4.200h10.800M.6 7.800h10.800" />
            </svg>
            <span className="ml-[6px] whitespace-nowrap text-[11.4px] tracking-[-0.11px]">{t}</span>
          </div>
        ))}
      </div>
    </section>
  );
}

/* ---------- Page tabs and status bar ---------- */

const PAGES: [string, string][] = [
  ["National", "w-[86px]"],
  ["Queues", "w-[81px]"],
  ["pollution_data", "w-[117px]"],
  ["crime-related data", "w-[139px]"],
  ["Nationals", "w-[91px]"],
  ["Sokoto", "w-[78px]"],
  ["Akatsi", "w-[73px]"],
  ["Amanzi", "w-[82px]"],
  ["Hawassa", "w-[86px]"],
  ["Kilimani", "w-[83px]"],
];

function PageTabs() {
  return (
    <div className="flex h-[35px] shrink-0 bg-[#f3f2f1]">
      <div className="flex w-[128px] items-start border-r border-[#a6a6a6] pt-[5px]">
        <div className="ml-[10px] flex w-[24px] flex-col items-center">
          <svg width="20" height="16" viewBox="0 0 20 16" fill="none" stroke="#484644" strokeWidth="1.4">
            <path d="M1 1.700h18v10.500H1zM10 12v3M6.500 15h7" />
          </svg>
          <i className="mt-[7px] h-[3px] w-[24px] rounded-sm bg-[#117865]" />
        </div>
        <svg className="ml-[26px]" width="13" height="20" viewBox="0 0 13 20" fill="none" stroke="#605e5c" strokeWidth="1.3">
          <rect x=".7" y=".7" width="11.6" height="18.6" rx="1" />
          <path d="M5.500 16.500h2" strokeWidth="1.8" />
        </svg>
        <svg className="ml-[21px] mt-[9px]" width="27" height="8" viewBox="0 0 27 8" fill="#c8c6c4">
          <path d="M5 0v8L0 4zM22 0v8l5-4z" />
        </svg>
      </div>
      {PAGES.map(([p, w]) => (
        <div
          key={p}
          className={
            "flex items-center justify-center border-r border-[#d2d0ce] bg-white text-[11.4px] whitespace-nowrap text-[#252423] " +
            w +
            (p === "Amanzi" ? " border-b-4 border-b-[#117865] pt-[6px] font-bold tracking-[-0.3px]" : " pt-[2px] tracking-[-0.1px]")
          }
        >
          {p}
        </div>
      ))}
      <div className="flex w-[39px] items-center justify-center bg-[#117865] pb-[1px]">
        <svg width="11" height="11" viewBox="0 0 11 11" stroke="#fff" strokeWidth="2.4">
          <path d="M0 5.500h11M5.500 0v11" />
        </svg>
      </div>
    </div>
  );
}

function StatusBar() {
  return (
    <footer className="flex h-[25px] shrink-0 items-center border-b border-t border-b-black border-t-[#dddbd9] bg-[#f3f2f1] text-[11.5px] text-[#484644]">
      <span className="pl-[4px] pt-[2px]">Page 8 of 10</span>
      <div className="ml-auto flex items-center">
        <i className="h-[2px] w-[4px] bg-[#605e5c]" />
        <div className="ml-[5px] flex h-[11px] w-[100px] items-center">
          <i className="h-px w-[51px] bg-[#605e5c]" />
          <i className="h-[11px] w-[4px] bg-[#484644]" />
          <i className="h-px flex-1 bg-[#605e5c]" />
        </div>
        <svg className="ml-[6px]" width="8" height="8" viewBox="0 0 8 8" stroke="#605e5c" strokeWidth="1.2">
          <path d="M0 4h8M4 0v8" />
        </svg>
        <span className="ml-[13px] w-[30px]">114%</span>
        <svg className="ml-[11px]" width="17" height="12" viewBox="0 0 17 12" fill="none" stroke="#484644">
          <path d="M.5.5h16v11H.5zM3 5V3h3M11 3h3v2M3 7.500v2h3M11 9.500h3v-2" />
        </svg>
        <span className="ml-[14px] mr-[4px] w-[192px] pt-[2px] whitespace-nowrap tracking-[-0.02px]">Update available (click to download)</span>
      </div>
    </footer>
  );
}

/* ---------- Taskbar ---------- */

function PbiLogo() {
  return (
    <svg width="20" height="24" viewBox="0 0 20 24">
      <rect x="11" y="0" width="9" height="24" rx="1.2" fill="#d9980f" />
      <rect x="5.500" y="6" width="9" height="18" rx="1.2" fill="#eebc1d" />
      <rect x="0" y="12" width="9" height="12" rx="1.2" fill="#f7dc5b" />
    </svg>
  );
}

function Task({ name, active = false, icon }: { name: string; active?: boolean; icon: React.ReactNode }) {
  return (
    <div className={"flex w-[160px] flex-col " + (active ? "bg-[#4b4c4d]" : "px-[4px]")}>
      <div className={"flex h-[37px] items-center " + (active ? "pl-[12px]" : "pl-[8px]")}>
        <span className="flex w-[26px] pt-[3px]">{icon}</span>
        <span className="w-[112px] pt-[1px] text-[11.4px] whitespace-nowrap tracking-[-0.08px] text-white">{name}</span>
      </div>
      <i className="mt-auto block h-[2px] w-full bg-[#76b9ed]" />
    </div>
  );
}

function Taskbar() {
  return (
    <div className="flex h-[40px] shrink-0 bg-[#1c1f21]">
      <div className="flex w-[48px] items-center pl-[16px]">
        <svg width="16" height="16" viewBox="0 0 16 16" fill="#fff">
          <path d="M0 2.300l6.500-.9v6.200H0zM7.300 1.300L16 0v7.600H7.300zM0 8.400h6.500v6.200L0 13.700zM7.300 8.400H16V16l-8.700-1.300z" />
        </svg>
      </div>
      <div className="flex w-[344px] items-center border border-[#c4c4c4] bg-[#f2f2f2] pl-[11px]">
        <svg width="17" height="17" viewBox="0 0 17 17" fill="none" stroke="#222" strokeWidth="1.4">
          <circle cx="10.5" cy="6" r="5.2" />
          <path d="M7 9.500L.8 16.300" />
        </svg>
        <span className="ml-[11px] text-[14px] tracking-[-0.1px] text-[#3b3b3b]">Type here to search</span>
      </div>
      <div className="flex w-[52px] items-center pl-[15px]">
        <svg width="24" height="24" viewBox="0 0 24 24">
          <circle cx="12" cy="12" r="12" fill="#34a853" />
          <path d="M1.600 6a12 12 0 0120.800 0L24 8H12L7 14z" fill="#ea4335" />
          <path d="M22.400 6A12 12 0 0112 24l5.200-9L19 6.500z" fill="#fbbc05" />
          <circle cx="12" cy="12" r="5.5" fill="#fff" />
          <circle cx="12" cy="12" r="4.3" fill="#4285f4" />
        </svg>
      </div>
      <Task
        name="PowerBI"
        icon={
          <svg width="15" height="20" viewBox="0 0 15 20">
            <path d="M1 1h5l1 1h7v15H1z" fill="#e3b34d" />
            <path d="M0 2h6v18l-6-3z" fill="#fbdf8d" />
            <path d="M6 3h8v14H6z" fill="#f7cf6b" />
          </svg>
        }
      />
      <Task name="Untitled - Power BI ..." icon={null} />
      <Task name="part_four_project" icon={<PbiLogo />} />
      <Task name="Part_three_project" active icon={<PbiLogo />} />
      <Task name="Part_two_project" icon={<PbiLogo />} />
      <Task name="Part1" icon={<PbiLogo />} />
      <div className="ml-auto flex items-center text-[11.4px] text-white">
        <svg width="12" height="8" viewBox="0 0 12 8" fill="none" stroke="#fff" strokeWidth="1.3">
          <path d="M.7 7L6 1.500 11.300 7" />
        </svg>
        <svg className="ml-[10px]" width="17" height="14" viewBox="0 0 17 14" fill="none" stroke="#fff" strokeWidth="1.2">
          <path d="M5 2.600h11.400v7.800H3.600V6M7 13.200h8M10.500 10.500v2.500M.6.600h4V5h-4zM2.500 5v8" />
        </svg>
        <svg className="ml-[7px]" width="17" height="16" viewBox="0 0 17 16" fill="none" stroke="#fff" strokeWidth="1.2">
          <path d="M.6 5H3l4-4v12L3 9.500H.6zM9 4c1 1 1.200 3 .5 4" />
          <circle cx="12.5" cy="11" r="4.5" fill="#d1242f" stroke="none" />
          <path d="M10.700 9.200l3.600 3.600M14.300 9.200l-3.600 3.600" />
        </svg>
        <div className="ml-[9px] w-[60px] text-center leading-[18px] tracking-[-0.2px]">
          <div>19:45</div>
          <div>2025/09/03</div>
        </div>
        <i className="ml-[4px] mr-[4px] h-[40px] w-px bg-[#5b5d5f]" />
      </div>
    </div>
  );
}

export default function App() {
  return (
    <div className="flex h-[1080px] w-[1920px] flex-col overflow-hidden bg-[#f3f2f1] font-['Open_Sans',sans-serif]">
      <TitleBar />
      <Ribbon />
      <div className="flex h-[855px] shrink-0">
        <Rail />
        <div className="flex w-[1518px] shrink-0 flex-col">
          <div className="flex h-[820px]">
            <Report />
            <FiltersPane />
          </div>
          <PageTabs />
        </div>
        <Visualizations />
        <DataPane />
      </div>
      <StatusBar />
      <Taskbar />
    </div>
  );
}
